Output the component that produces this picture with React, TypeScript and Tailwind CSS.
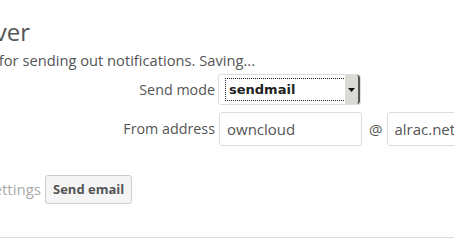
export default function App() {
  return (
    <div
      className="w-[454px] h-[241px] overflow-hidden bg-white text-[#555]"
      style={{ fontFamily: '"Open Sans", "Liberation Sans", sans-serif' }}
    >
      <div className="flex justify-end w-[30px] pt-[17px]">
        <h2 className="shrink-0 whitespace-nowrap text-[24px] leading-[30px] font-normal">
          Email Server
        </h2>
      </div>
      <div className="flex justify-end w-[255px] mt-[3px]">
        <p className="shrink-0 whitespace-nowrap text-[14.7px] leading-[20px]">
          This is used for sending out notifications. <span>Saving...</span>
        </p>
      </div>

      <div className="mt-[4px] flex flex-col gap-[7px]">
        <div className="flex items-center">
          <label className="w-[215px] shrink-0 text-right text-[14.3px]">Send mode</label>
          <div className="ml-[3px] shrink-0 relative w-[143px] h-[31px] rounded-[3px] border border-[#ddd] bg-white flex items-center">
            <div className="ml-[6px] w-[121px] h-[23px] border border-dotted border-[#222] flex items-center pl-[3px]">
              <span
                className="text-[13px] font-bold text-[#222]"
                style={{ fontFamily: '"DejaVu Sans", sans-serif' }}
              >
                sendmail
              </span>
            </div>
            <div className="absolute right-0 top-0 bottom-0 w-[15px] bg-[#dcdad5] border-r-2 border-[#555] rounded-r-[3px] flex items-center justify-center">
              <svg width="7" height="4" viewBox="0 0 7 4">
                <path d="M0 0h7L3.5 4z" fill="#111" />
              </svg>
            </div>
          </div>
        </div>
        <div className="flex items-center">
          <label className="w-[215px] shrink-0 text-right text-[14.3px]">From address</label>
          <div className="ml-[4px] shrink-0 w-[143px] h-[34px] rounded-[3px] border border-[#ddd] flex items-center px-[7px] text-[15px] text-[#555]">
            owncloud
          </div>
          <span className="ml-[7px] shrink-0 text-[15px] text-[#555]">@</span>
          <div className="ml-[5px] w-[120px] shrink-0 h-[34px] rounded-[3px] border border-[#ddd] flex items-center px-[6px] text-[15px] text-[#555]">
            alrac.net
          </div>
        </div>
      </div>

      <div className="mt-[29px] flex items-center">
        <div className="flex justify-end w-[41px]">
          <span className="shrink-0 whitespace-nowrap text-[15px] text-[#aaa]">
            Test email settings
          </span>
        </div>
        <button className="ml-[4px] h-[29px] px-[7px] rounded-[3px] border border-[#ccc] bg-[#f5f5f5] text-[13px] font-bold text-[#555]">
          Send email
        </button>
      </div>

      <div className="mt-[33px] border-t border-[#ddd]" />
    </div>
  );
}
